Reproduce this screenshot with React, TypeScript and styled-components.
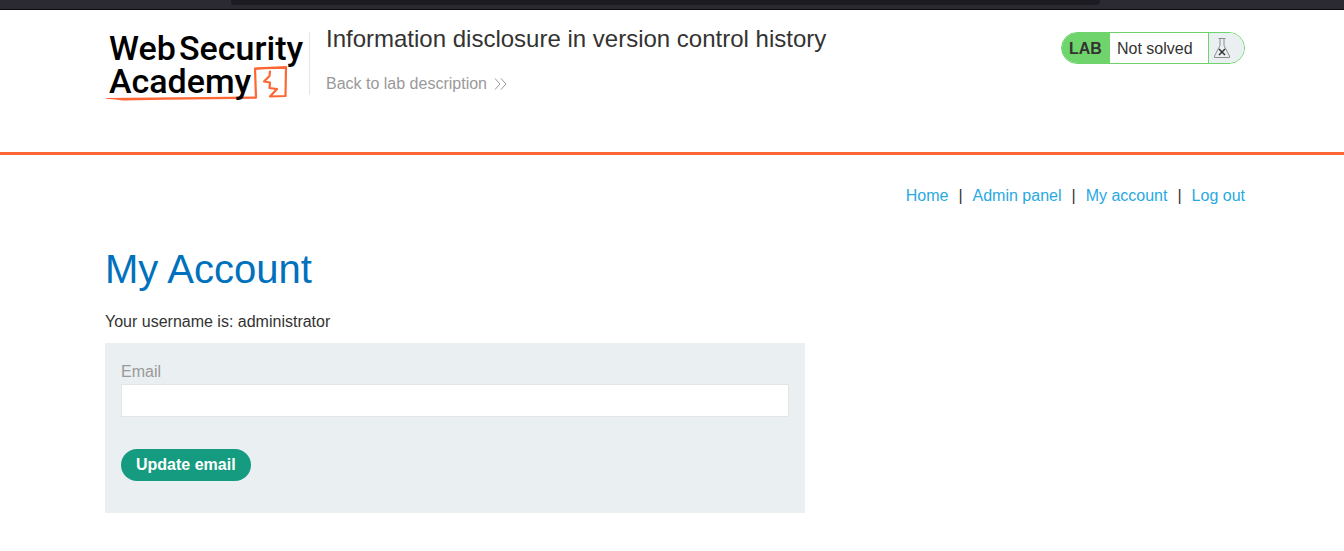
import React from "react";
import styled, { createGlobalStyle } from "styled-components";

const GlobalStyle = createGlobalStyle`
  *, *::before, *::after { box-sizing: border-box; }
  body {
    margin: 0;
    background: #fff;
    color: #333332;
    font-family: "Liberation Sans", Arial, Helvetica, sans-serif;
    font-size: 16px;
    line-height: 20px;
  }
`;

const BrowserEdge = styled.div`
  display: flex;
  height: 10px;
  padding: 0 244px 0 231px;
  background: #2b2a33;
  border-bottom: 1px solid #0c0c0d;
`;

const AddressBar = styled.div`
  flex: 1;
  height: 5px;
  background: #1c1b22;
  border-radius: 0 0 4px 4px;
`;

const Header = styled.header`
  display: flex;
  align-items: flex-start;
  min-height: 145px;
  padding: 17px 99px 0 105px;
  border-bottom: 3px solid #ff6633;
`;

const LogoLink = styled.a`
  display: block;
  flex: none;
  width: 204px;
  height: 76px;
  svg { display: block; }
`;

const LogoText = styled.text`
  font-family: Roboto, sans-serif;
  font-size: 34px;
  font-weight: 500;
  fill: #000;
`;

const TitleBlock = styled.div`
  flex: 1;
  height: 63px;
  margin-top: 5px;
  padding-left: 16px;
  border-left: 1px solid #e5e5e5;
`;

const LabTitle = styled.h2`
  margin: -8px 0 20px;
  font-size: 24px;
  line-height: 30px;
  font-weight: 400;
`;

const BackLink = styled.a`
  display: inline-flex;
  align-items: center;
  gap: 7px;
  color: #999;
  text-decoration: none;
`;

const LabStatus = styled.div`
  display: flex;
  height: 32px;
  margin-top: 5px;
  overflow: hidden;
  line-height: 32px;
  border: 1px solid #70d46c;
  border-radius: 16px;
  background: #fff;
`;

const LabTag = styled.span`
  width: 48px;
  padding-left: 7px;
  font-weight: 700;
  background: #70d46c;
`;

const StatusText = styled.span`
  width: 98px;
  padding-left: 7px;
`;

const FlaskCell = styled.span`
  width: 36px;
  padding: 5px 0 0 4px;
  background: #eaeff2;
  border-left: 1px solid #70d46c;
  svg { display: block; }
`;

const Main = styled.main`
  padding: 31px 99px 38px 105px;
`;

const Nav = styled.nav`
  display: flex;
  justify-content: flex-end;
  gap: 10px;
`;

const NavLink = styled.a`
  color: #29a9e1;
  text-decoration: none;
`;

const Heading = styled.h1`
  margin: 39px 0 19px;
  font-size: 40px;
  line-height: 48px;
  font-weight: 400;
  color: #0071bc;
`;

const Paragraph = styled.p`
  margin: 0 0 11px;
`;

const EmailForm = styled.form`
  max-width: 700px;
  padding: 19px 16px 32px;
  background: #eaeff2;
`;

const Label = styled.label`
  display: block;
  margin-bottom: 2px;
  color: #999;
`;

const TextInput = styled.input`
  display: block;
  width: 100%;
  height: 33px;
  margin-bottom: 32px;
  padding: 0 8px;
  font: inherit;
  border: 1px solid #e4e4e4;
  background: #fff;
`;

const Button = styled.button`
  height: 32px;
  padding: 0 15px;
  font: inherit;
  font-weight: 700;
  color: #fff;
  background: #159c80;
  border: 0;
  border-radius: 16px;
  display: block;
`;

const Logo = () => (
  <svg width="204" height="76" viewBox="0 0 204 76" role="img" aria-label="Web Security Academy">
    <g fill="none" stroke="#ff6633" strokeLinejoin="round" strokeLinecap="round">
      <path d="M151 70.500L150 41.500L181 40L180.500 69L165 69.500L172 62L164.500 61L165 55.500L159 54.500L164.500 49L165 44.500" strokeWidth="2.200" />
      <path d="M150 42C160 40.500 172 41 180 41" strokeWidth="2" />
    </g>
    <path d="M1 71L150 69.500L152 70.500L151 71.800L60 72.800L18 73.500L10 72.500L1 71.800Z" fill="#ff6633" />
    <LogoText x="4" y="33">Web</LogoText>
    <LogoText x="74" y="33">Security</LogoText>
    <LogoText x="4" y="66">Academy</LogoText>
  </svg>
);

const Chevrons = () => (
  <svg width="13" height="12" viewBox="0 0 13 12" fill="none" stroke="#999" aria-hidden="true">
    <path d="M1 0.500L6 6L1 11.500M7 0.500L12 6L7 11.500" />
  </svg>
);

const Flask = () => (
  <svg width="18" height="21" viewBox="0 0 18 21" fill="none" aria-hidden="true">
    <path d="M5.500 0.500H12.500M7 0.500V7.500L1.500 18V19.500H16.500V18L11 7.500V0.500" stroke="#8b8d8f" />
    <path d="M6 11L12 17M12 11L6 17" stroke="#333332" strokeWidth="1.500" />
  </svg>
);

const links = ["Home", "Admin panel", "My account", "Log out"];

export default function App() {
  return (
    <>
      <GlobalStyle />
      <BrowserEdge>
        <AddressBar />
      </BrowserEdge>
      <Header>
        <LogoLink href="#">
          <Logo />
        </LogoLink>
        <TitleBlock>
          <LabTitle>Information disclosure in version control history</LabTitle>
          <BackLink href="#">
            Back to lab description
            <Chevrons />
          </BackLink>
        </TitleBlock>
        <LabStatus>
          <LabTag>LAB</LabTag>
          <StatusText>Not solved</StatusText>
          <FlaskCell>
            <Flask />
          </FlaskCell>
        </LabStatus>
      </Header>
      <Main>
        <Nav>
          {links.map((name, i) => (
            <React.Fragment key={name}>
              {i > 0 && <span>|</span>}
              <NavLink href="#">{name}</NavLink>
            </React.Fragment>
          ))}
        </Nav>
        <Heading>My Account</Heading>
        <Paragraph>Your username is: administrator</Paragraph>
        <EmailForm onSubmit={(e) => e.preventDefault()}>
          <Label htmlFor="email">Email</Label>
          <TextInput id="email" type="email" />
          <Button type="submit">Update email</Button>
        </EmailForm>
      </Main>
    </>
  );
}
